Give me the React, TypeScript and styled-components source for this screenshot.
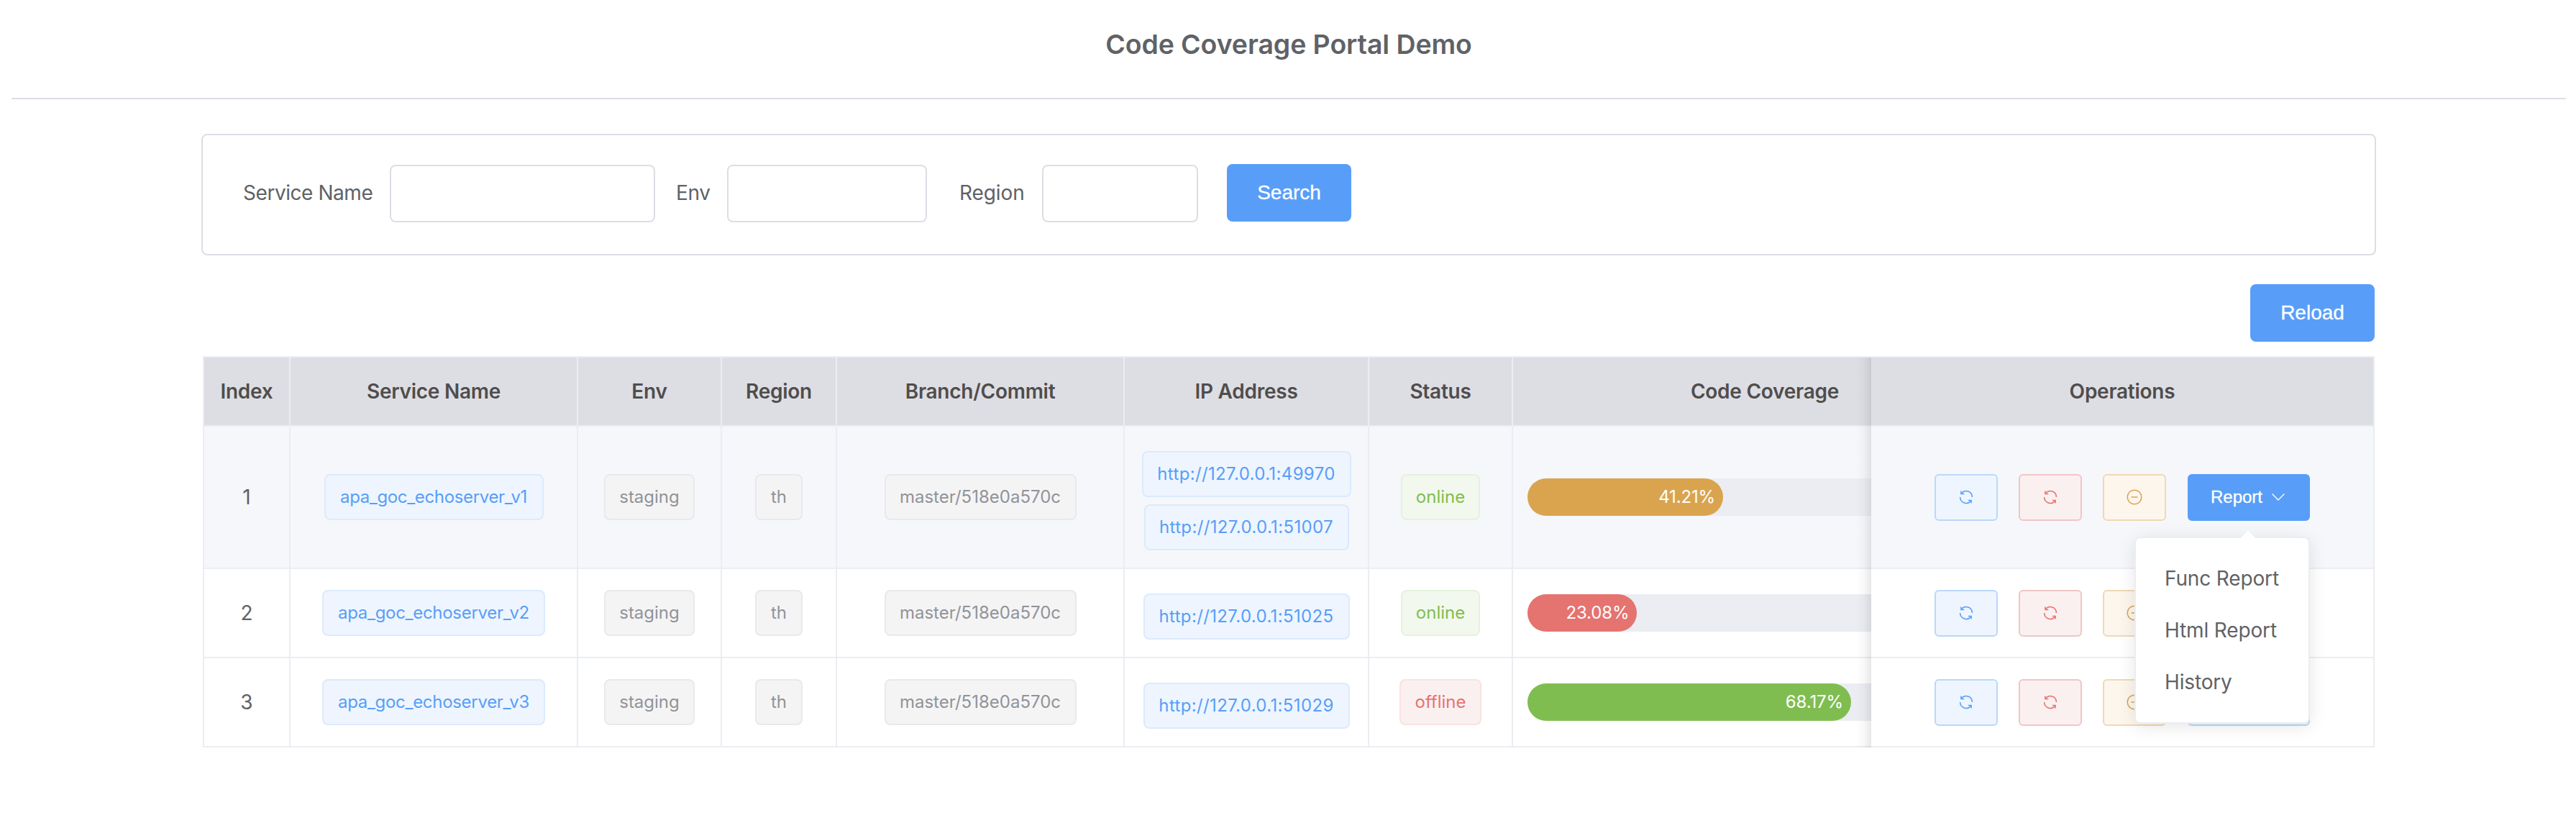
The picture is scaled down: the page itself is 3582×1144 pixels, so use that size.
import React from "react";
import styled, { createGlobalStyle, css } from "styled-components";

const Global = createGlobalStyle`
  * { box-sizing: border-box; }
  body { margin: 0; background: #fff; color: #606266; font-family: Inter, "Liberation Sans", sans-serif; font-size: 28px; }
`;

const Page = styled.div`
  display: flex;
  flex-direction: column;
  height: 1144px;
  overflow: hidden;
`;
const Header = styled.header`
  margin: 0 14px 0 16px;
  height: 138px;
  border-bottom: 2px solid #dddee5;
  text-align: center;
`;
const Title = styled.h3`
  margin: 0;
  font-size: 37.44px;
  font-weight: 600;
  letter-spacing: -0.06px;
  line-height: 124px;
`;
const Main = styled.main`
  width: 3024px;
  margin: 48px auto 0 280px;
`;
const SearchForm = styled.form`
  display: flex;
  align-items: flex-start;
  height: 169px;
  padding: 40px 0 0 56px;
  border: 2px solid #dddee5;
  border-radius: 8px;
`;
const Label = styled.label<{ $w: number; $ls: number }>`
  width: ${(p) => p.$w}px;
  flex: none;
  line-height: 80px;
  letter-spacing: ${(p) => p.$ls}px;
  white-space: nowrap;
`;
const Input = styled.input<{ $w: number; $gap: number }>`
  width: ${(p) => p.$w}px;
  height: 80px;
  margin: 1px ${(p) => p.$gap}px 0 0;
  border: 2px solid #dddee5;
  border-radius: 8px;
  background: #fff;
`;
const PrimaryButton = styled.button`
  width: 173px;
  height: 80px;
  padding: 0;
  border: 0;
  border-radius: 8px;
  background: #589ef8;
  color: #fff;
  font: 500 28px "Liberation Sans", Arial, sans-serif;
  -webkit-text-stroke: 0.3px #fff;
`;
const Toolbar = styled.div`
  display: flex;
  justify-content: flex-end;
  padding: 40px 2px 20px 0;
`;

const Table = styled.div`
  position: relative;
  width: 3020px;
  margin-left: 2px;
  border: 2px solid #ebedf3;
  border-bottom: 0;
`;
const Row = styled.div<{ $h: number; $hover?: boolean; $head?: boolean }>`
  display: grid;
  grid-template-columns: 120px 400px 200px 160px 400px 340px 200px 498px 698px;
  height: ${(p) => p.$h}px;
  background: ${(p) => (p.$head ? "#dddee4" : p.$hover ? "#f5f7fb" : "#fff")};
  ${(p) =>
    p.$head &&
    css`
      color: #504d4c;
      font-weight: 600;
      letter-spacing: -0.25px;
    `}
`;
const Cell = styled.div`
  display: flex;
  flex-direction: column;
  align-items: center;
  justify-content: center;
  border-right: 2px solid #ebedf3;
  border-bottom: 2px solid #ebedf3;
`;
const ClipCell = styled(Cell)`
  align-items: flex-start;
  border-right: 0;
  overflow: hidden;
`;
const ClipInner = styled.div`
  width: 700px;
  padding: 0 20px;
  text-align: center;
  flex: none;
`;
const OpsCell = styled(Cell)<{ $start?: boolean }>`
  flex-direction: row;
  border-right: 0;
  ${(p) =>
    p.$start &&
    css`
      justify-content: flex-start;
      padding-left: 88px;
    `}
`;
const FixedShade = styled.div`
  position: absolute;
  top: 0;
  bottom: 0;
  left: 2296px;
  width: 22px;
  background: linear-gradient(to right, rgba(0, 0, 0, 0), rgba(0, 0, 0, 0.025) 50%, rgba(0, 0, 0, 0.09));
`;

const tones = {
  primary: ["#eef5fe", "#dceafc", "#589ef8", "#b9d8fb"],
  info: ["#f4f4f5", "#e9e9eb", "#919398", "#d3d4d6"],
  success: ["#f2f8ed", "#e4f2db", "#80bd51", "#c9e4b8"],
  danger: ["#fbf0f0", "#f8e2e2", "#e5736f", "#f1c5c5"],
  warning: ["#fdf6ed", "#f9ecda", "#daa44f", "#f0d9b2"],
};
type Tone = keyof typeof tones;

const Tag = styled.span<{ $tone: Tone; $w: number; $ls?: number }>`
  display: flex;
  align-items: center;
  justify-content: center;
  width: ${(p) => p.$w}px;
  height: 64px;
  padding-bottom: 1px;
  border: 2px solid ${(p) => tones[p.$tone][1]};
  border-radius: 8px;
  background: ${(p) => tones[p.$tone][0]};
  color: ${(p) => tones[p.$tone][2]};
  font-size: 24px;
  letter-spacing: ${(p) => p.$ls ?? 0}px;
  white-space: nowrap;
`;
const Stack = styled.div`
  display: flex;
  flex-direction: column;
  align-items: center;
  gap: 10px;
  padding-top: 10px;
`;
const Track = styled.div`
  height: 52px;
  border-radius: 100px;
  background: #ebedf2;
`;
const Fill = styled.div<{ $tone: Tone }>`
  height: 52px;
  padding-right: 11px;
  border-radius: 100px;
  background: ${(p) => tones[p.$tone][2]};
  color: #fff;
  font-size: 24px;
  letter-spacing: -0.15px;
  line-height: 52px;
  text-align: right;
`;
const IconButton = styled.button<{ $tone: Tone }>`
  display: flex;
  align-items: center;
  justify-content: center;
  width: 88px;
  height: 65px;
  margin: 0 29px 0 0;
  padding: 0;
  border: 2px solid ${(p) => tones[p.$tone][3]};
  border-radius: 6px;
  background: ${(p) => tones[p.$tone][0]};
  color: ${(p) => tones[p.$tone][2]};
`;
const ReportButton = styled.button<{ $active: boolean }>`
  display: flex;
  align-items: center;
  justify-content: center;
  gap: 10px;
  width: 170px;
  height: 65px;
  padding: 0;
  margin-left: 1px;
  border: 2px solid ${(p) => (p.$active ? "#589ef8" : "#b9d8fb")};
  border-radius: 6px;
  background: ${(p) => (p.$active ? "#589ef8" : "#eef5fe")};
  color: ${(p) => (p.$active ? "#fff" : "#589ef8")};
  font: 500 24px "Liberation Sans", Arial, sans-serif;
  -webkit-text-stroke: 0.3px currentColor;
`;
const Dropdown = styled.ul`
  position: absolute;
  left: 2684px;
  top: 249px;
  width: 244px;
  height: 260px;
  margin: 0;
  padding: 20px 0;
  list-style: none;
  border: 2px solid #ebedf3;
  border-radius: 8px;
  background: #fff;
  box-shadow: 0 4px 24px rgba(0, 0, 0, 0.1);
`;
const Arrow = styled.svg`
  position: absolute;
  left: 145px;
  top: -12px;
`;
const MenuItem = styled.li`
  padding: 0 40px;
  letter-spacing: -0.15px;
  line-height: 72px;
  white-space: nowrap;
`;

const RefreshIcon = () => (
  <svg width="24" height="24" viewBox="0 0 24 24" fill="none" stroke="currentColor" strokeWidth="1.5">
    <path d="M5.4 6.8A8.4 8.4 0 0 1 20.4 12" />
    <path d="M4.9 3.6V7.5H9.2" />
    <path d="M18.6 17.2A8.4 8.4 0 0 1 3.6 12" />
    <path d="M19.1 20.4V16.5H14.8" />
  </svg>
);
const RemoveIcon = () => (
  <svg width="24" height="24" viewBox="0 0 24 24" fill="none" stroke="currentColor" strokeWidth="1.5">
    <circle cx="12" cy="12" r="9.8" />
    <path d="M7.5 12H16.5" />
  </svg>
);
const ChevronIcon = () => (
  <svg width="24" height="12" viewBox="0 0 24 12" fill="none" stroke="currentColor" strokeWidth="1.4">
    <path d="M3.5 1.5L12 9.9L20.5 1.5" />
  </svg>
);

const columns = ["Index", "Service Name", "Env", "Region", "Branch/Commit", "IP Address", "Status"];
const rows = [
  { h: 198, name: "apa_goc_echoserver_v1", nw: 305, ips: [["http://127.0.0.1:49970", 291], ["http://127.0.0.1:51007", 285]], on: true, pct: 41.21, tone: "warning" },
  { h: 124, name: "apa_goc_echoserver_v2", nw: 310, ips: [["http://127.0.0.1:51025", 287]], on: true, pct: 23.08, tone: "danger" },
  { h: 124, name: "apa_goc_echoserver_v3", nw: 310, ips: [["http://127.0.0.1:51029", 287]], on: false, pct: 68.17, tone: "success" },
] as const;

export default function App() {
  return (
    <Page>
      <Global />
      <Header>
        <Title>Code Coverage Portal Demo</Title>
      </Header>
      <Main>
        <SearchForm>
          <Label $w={204} $ls={-0.45}>Service Name</Label>
          <Input $w={369} $gap={29} />
          <Label $w={71} $ls={-0.4}>Env</Label>
          <Input $w={278} $gap={45} />
          <Label $w={115} $ls={-0.1}>Region</Label>
          <Input $w={217} $gap={40} />
          <PrimaryButton type="button">Search</PrimaryButton>
        </SearchForm>
        <Toolbar>
          <PrimaryButton type="button">Reload</PrimaryButton>
        </Toolbar>
        <Table>
          <Row $h={96} $head>
            {columns.map((c) => (
              <Cell key={c}>{c}</Cell>
            ))}
            <ClipCell>
              <ClipInner>Code Coverage</ClipInner>
            </ClipCell>
            <OpsCell>Operations</OpsCell>
          </Row>
          {rows.map((r, i) => (
            <Row key={r.name} $h={r.h} $hover={i === 0}>
              <Cell>{i + 1}</Cell>
              <Cell><Tag $tone="primary" $w={r.nw} $ls={i === 0 ? -0.35 : -0.3}>{r.name}</Tag></Cell>
              <Cell><Tag $tone="info" $w={126}>staging</Tag></Cell>
              <Cell><Tag $tone="info" $w={66}>th</Tag></Cell>
              <Cell><Tag $tone="info" $w={267}>master/518e0a570c</Tag></Cell>
              <Cell>
                <Stack>
                  {r.ips.map(([ip, w]) => (
                    <Tag key={ip} $tone="primary" $w={w} $ls={0.36}>{ip}</Tag>
                  ))}
                </Stack>
              </Cell>
              <Cell>
                <Tag $tone={r.on ? "success" : "danger"} $w={r.on ? 110 : 114}>{r.on ? "online" : "offline"}</Tag>
              </Cell>
              <ClipCell>
                <ClipInner>
                  <Track>
                    <Fill $tone={r.tone} style={{ width: `${r.pct}%` }}>{r.pct}%</Fill>
                  </Track>
                </ClipInner>
              </ClipCell>
              <OpsCell $start>
                <IconButton $tone="primary"><RefreshIcon /></IconButton>
                <IconButton $tone="danger"><RefreshIcon /></IconButton>
                <IconButton $tone="warning"><RemoveIcon /></IconButton>
                <ReportButton $active={i === 0}>Report <ChevronIcon /></ReportButton>
              </OpsCell>
            </Row>
          ))}
          <FixedShade />
          <Dropdown>
            <Arrow width="22" height="13" viewBox="0 0 22 13">
              <path d="M0 12.5L11 1.5L22 12.5Z" fill="#fff" />
            </Arrow>
            <MenuItem>Func Report</MenuItem>
            <MenuItem>Html Report</MenuItem>
            <MenuItem>History</MenuItem>
          </Dropdown>
        </Table>
      </Main>
    </Page>
  );
}
